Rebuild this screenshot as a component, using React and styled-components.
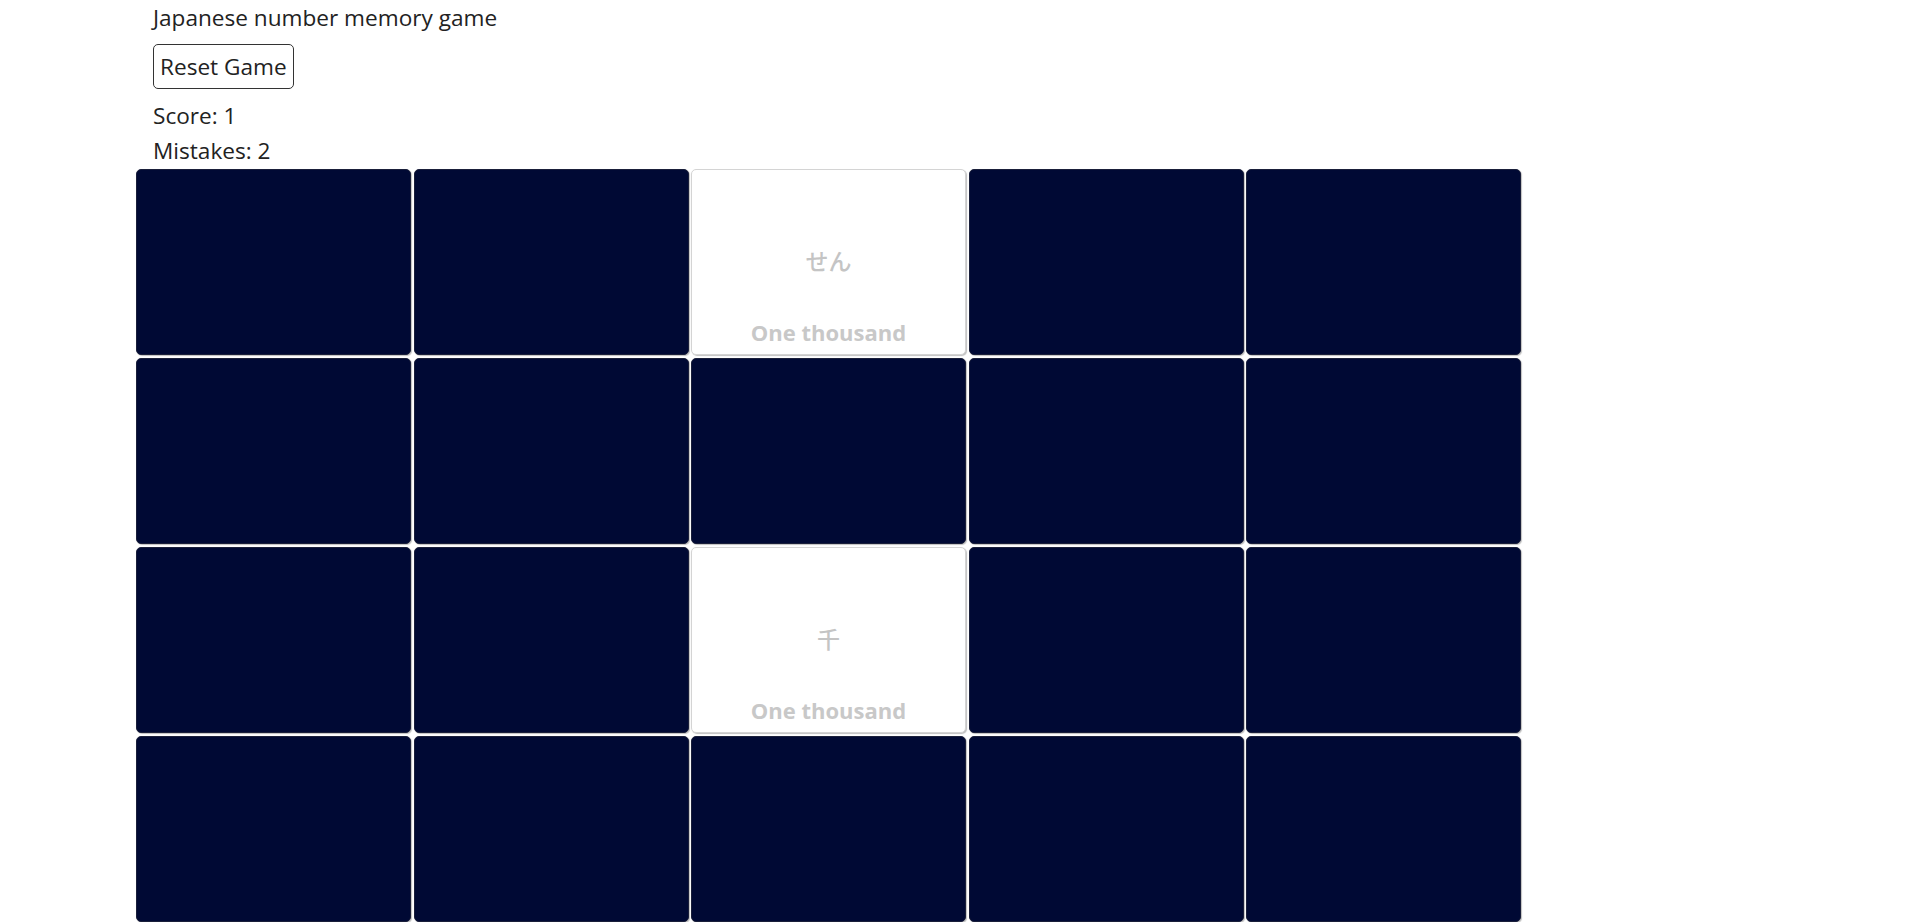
import React from "react";
import styled, { createGlobalStyle } from "styled-components";

const GlobalStyle = createGlobalStyle`
  body {
    margin: 0;
    background: #ffffff;
    font-family: "Open Sans", "Noto Sans CJK JP", sans-serif;
    color: #222222;
    overflow: hidden;
  }
`;

const Page = styled.div`
  padding-left: 136px;
`;

const Header = styled.div`
  display: flex;
  flex-direction: column;
  align-items: flex-start;
  gap: 9px;
  padding-left: 17px;
`;

const Title = styled.div`
  font-size: 22.6px;
  line-height: 35px;
`;

const ResetButton = styled.button`
  font-family: inherit;
  font-size: 22.6px;
  color: #222222;
  background: #ffffff;
  border: 1px solid #333333;
  border-radius: 5px;
  padding: 0 6px;
  height: 45px;
  cursor: pointer;
`;

const Stats = styled.div`
  font-size: 22.6px;
  line-height: 35px;
`;

const Board = styled.div`
  display: grid;
  grid-template-columns: repeat(5, 275px);
  grid-auto-rows: 186px;
  gap: 3px 2.5px;
  margin-top: 1px;
`;

const Card = styled.div`
  position: relative;
  box-sizing: border-box;
  border-radius: 5px;
  display: flex;
  align-items: center;
  justify-content: center;
  background: ${(p) => (p.$flipped ? "#ffffff" : "#000934")};
  border: 1px solid ${(p) => (p.$flipped ? "#d4d4d4" : "#1a1f3a")};
  box-shadow: 1px 1px 1px rgba(0, 0, 0, 0.25);
`;

const Glyph = styled.span`
  font-size: 23px;
  color: #c4c4c4;
  font-weight: 500;
  margin-bottom: 4px;
`;

const Label = styled.span`
  position: absolute;
  left: 0;
  right: 0;
  bottom: 7px;
  text-align: center;
  font-size: 22px;
  font-weight: 700;
  color: #c8c8c8;
`;

const cards = Array.from({ length: 20 }, (_, i) => {
  if (i === 2) return { face: "せん", label: "One thousand" };
  if (i === 12) return { face: "千", label: "One thousand" };
  return null;
});

export default function App() {
  return (
    <Page>
      <GlobalStyle />
      <Header>
        <Title>Japanese number memory game</Title>
        <ResetButton>Reset Game</ResetButton>
        <Stats>
          <div>Score: 1</div>
          <div>Mistakes: 2</div>
        </Stats>
      </Header>
      <Board>
        {cards.map((c, i) => (
          <Card key={i} $flipped={!!c}>
            {c && (
              <>
                <Glyph>{c.face}</Glyph>
                <Label>{c.label}</Label>
              </>
            )}
          </Card>
        ))}
      </Board>
    </Page>
  );
}
